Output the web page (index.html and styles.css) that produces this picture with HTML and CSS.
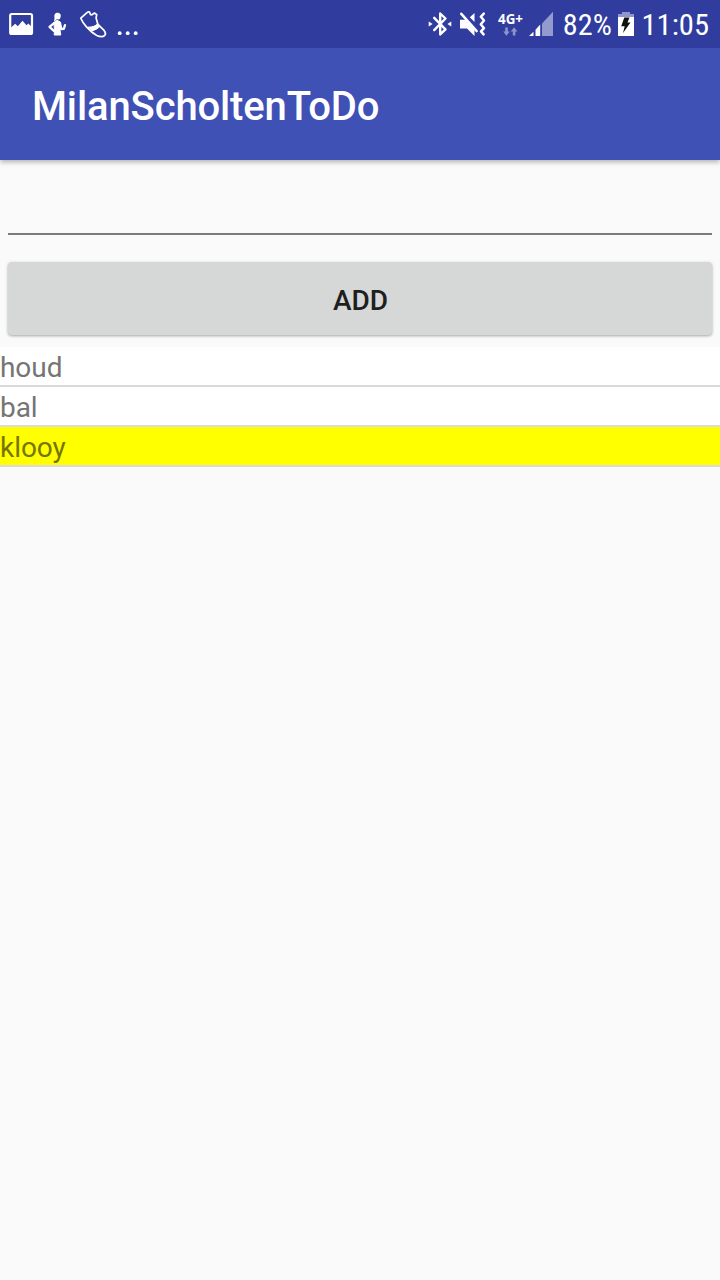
FILE: index.html
```html
<!DOCTYPE html>
<html lang="nl">
<head>
<meta charset="utf-8">
<title>MilanScholtenToDo</title>
<link rel="stylesheet" href="styles.css">
</head>
<body>
<header class="status">
  <div class="status-side">
    <svg width="26" height="48" viewBox="8 0 26 48"><rect x="10.2" y="14" width="21.8" height="20" rx="1.5" fill="none" stroke="#fff" stroke-width="2.2"/><path d="M11 27.5l4.2-3.7 2.6 2.4 4.7-5.4 4 4.4 1.8-1.7 3.2 3V34H11z" fill="#fff"/></svg>
    <svg class="runner" width="20" height="48" viewBox="47 0 20 48" fill="none" stroke="#fff" stroke-linecap="round" stroke-linejoin="round"><path d="M54.5 14.8c.5-1.6 2-2.2 3.6-2 2 .3 3 1.8 2.6 3.6-.2 1.5-.8 2.7-2 3.2l-2.2-.4c-.4 1.2-1.2 1.8-2.5 1.8 1-1.8 0-3.5.5-6.2z" fill="#fff" stroke="none"/><path d="M54 22.3l3-2 3 1.5 1 5.2-1 3 .8 5h-6.6l.3-5z" fill="#fff" stroke-width="1"/><path d="M53.8 23.3l-4.3 3.5 4.4 4M60 23l1.2 6 2.6-.2 1.2-3.6" stroke-width="2.3"/></svg>
    <svg class="shoe" width="29" height="48" viewBox="79 0 29 48" fill="none" stroke="#fff" stroke-width="1.7" stroke-linejoin="round" stroke-linecap="round"><path d="M80.8 18.2l6.5-5.8c1.2-1 2.4-.7 2.6.4.1 1.5.7 2.4 2 2l2.6-1.8 2.2 1.6-.6 3.4 1.8 6.4 6.2 6c1.6 2.1 1.8 3.7.7 4.9-1.8 1.8-5.1 1.5-8 .2-3.7-2-7.4-5.3-10.3-8.6-2.7-3-4.6-6-5.7-8.7z"/><path d="M88.3 27.2c4.5-.1 7.5-1.1 9.4-3.7l2.5 2.7c-2.2 2.2-4.8 4-8.7 4.6z" fill="#fff" stroke-width="1"/></svg>
    <svg class="more" width="22" height="48" viewBox="117 0 22 48" fill="#fff"><circle cx="119.7" cy="33.2" r="1.9"/><circle cx="127.7" cy="33.2" r="1.9"/><circle cx="135.7" cy="33.2" r="1.9"/></svg>
  </div>
  <div class="status-side">
    <svg width="24" height="48" viewBox="428 0 24 48"><path d="M434.2 17.8l11.3 11.6-5.3 5V13.5l5.3 5-11.3 11.6" fill="none" stroke="#fff" stroke-width="2.4" stroke-linecap="round" stroke-linejoin="round"/><path d="M428.7 21.4l3.9 2.6-3.9 2.6zM451.3 21.4l-3.9 2.6 3.9 2.6z" fill="#fff"/></svg>
    <svg class="mute" width="27" height="48" viewBox="459 0 27 48"><path d="M460 19.8h5.5l9 10V36l-7.5-7.5h-7zM474.5 13v9l-4.7-4.8z" fill="#fff"/><path d="M461.3 13.8l15.3 17.2" stroke="#fff" stroke-width="2.6" stroke-linecap="round"/><path d="M483.8 13.6l-3 3.2 3.2 3.7-3.2 3.7 3.2 4-3 3.2 2.6 3" fill="none" stroke="#fff" stroke-width="2.5" stroke-linejoin="round" stroke-linecap="round"/></svg>
    <svg class="net" width="25" height="48" viewBox="498 0 25 48"><text class="net-text" x="498" y="23.7" textLength="25" lengthAdjust="spacingAndGlyphs">4G+</text><path d="M505.2 27.5h2.6v4h2l-3.4 4.2-3.2-4.2h2zM512.8 35.5h2.6v-4h2l-3.3-4.2-3.3 4.2h2z" fill="#8c94c9"/></svg>
    <svg class="signal" width="25" height="48" viewBox="529 0 25 48"><path d="M542 23.5l11-11.8V36h-11z" fill="#929ace"/><path d="M529 36l4.5-4.3V36zM535.5 29.7l4.7-5.3V36h-4.7z" fill="#fff"/></svg>
    <svg class="percent" width="49" height="48" viewBox="563 0 49 48"><text class="status-text" x="562.8" y="34.8" textLength="49" lengthAdjust="spacingAndGlyphs">82%</text></svg>
    <svg class="battery" width="16" height="48" viewBox="618 0 16 48"><path d="M622 12h8v2h4v4h-16v-4h4z" fill="#8e96cb"/><path d="M618 17h16V36h-16z" fill="#fff"/><path d="M624.3 17.5h5.2l-2 5h3l-7.5 10.5 1.7-6.8h-3.5z" fill="#111"/></svg>
    <svg class="clock" width="68" height="48" viewBox="642 0 68 48"><text class="status-text" x="641.5" y="34.8" textLength="67.5" lengthAdjust="spacingAndGlyphs">11:05</text></svg>
  </div>
</header>
<div class="appbar"><h1 class="title">MilanScholtenToDo</h1></div>
<main>
  <div class="form">
    <input class="field" type="text" aria-label="Todo">
    <button class="add">ADD</button>
  </div>
  <ul class="list">
    <li class="item">houd</li>
    <li class="item">bal</li>
    <li class="item item-done">klooy</li>
  </ul>
</main>
</body>
</html>
```
FILE: styles.css
```css
body {
  margin: 0;
  min-height: 1280px;
  background: #fafafa;
  font-family: Roboto, "Noto Sans", sans-serif;
}
.status {
  position: relative;
  z-index: 1;
  height: 48px;
  padding: 0 10px 0 8px;
  box-sizing: border-box;
  display: flex;
  justify-content: space-between;
  background: #303d9f;
}
.status-side { display: flex; }
.status svg { display: block; flex: none; }
.runner { margin-left: 13px; }
.shoe { margin-left: 12px; }
.more { margin-left: 9px; }
.mute { margin-left: 7px; }
.net { margin-left: 12px; }
.signal { margin-left: 6px; }
.percent { margin-left: 9px; }
.battery { margin-left: 6px; }
.clock { margin-left: 8px; }
.status-text {
  font-family: "Roboto Condensed", Roboto, sans-serif;
  font-size: 30px;
  fill: #fff;
}
.net-text {
  font-family: "Open Sans", sans-serif;
  font-size: 13.5px;
  font-weight: 700;
  fill: #fff;
}
.appbar {
  position: relative;
  height: 112px;
  padding: 6px 32px 0;
  box-sizing: border-box;
  display: flex;
  align-items: center;
  background: #3f51b5;
  box-shadow: 0 2px 5px rgba(0, 0, 0, .3);
}
.title {
  margin: 0;
  font-size: 40px;
  line-height: 48px;
  font-weight: 500;
  letter-spacing: -0.13px;
  color: #fff;
}
.form {
  height: 187px;
  padding: 0 8px 12px;
  box-sizing: border-box;
  display: flex;
  flex-direction: column;
}
.field {
  height: 75px;
  padding: 0;
  box-sizing: border-box;
  border: 0;
  border-bottom: 2px solid #7c7b7c;
  outline: 0;
  background: transparent;
  font: 36px Roboto, sans-serif;
}
.add {
  height: 73px;
  margin-top: 27px;
  padding: 4px 0 0 1px;
  border: 0;
  border-radius: 4px;
  background: #d6d8d7;
  box-shadow: 0 1px 3px rgba(0, 0, 0, .35);
  font: 500 28px Roboto, sans-serif;
  color: #1e1f1e;
}
.list {
  margin: 0;
  padding: 0;
  list-style: none;
  background: #fff;
}
.item {
  height: 36px;
  padding-top: 2px;
  line-height: 38px;
  border-bottom: 2px solid #dadada;
  font-size: 28px;
  letter-spacing: -0.05px;
  color: #757575;
}
.item-done {
  background: #ff0;
  background-clip: padding-box;
  color: #757500;
}
```
